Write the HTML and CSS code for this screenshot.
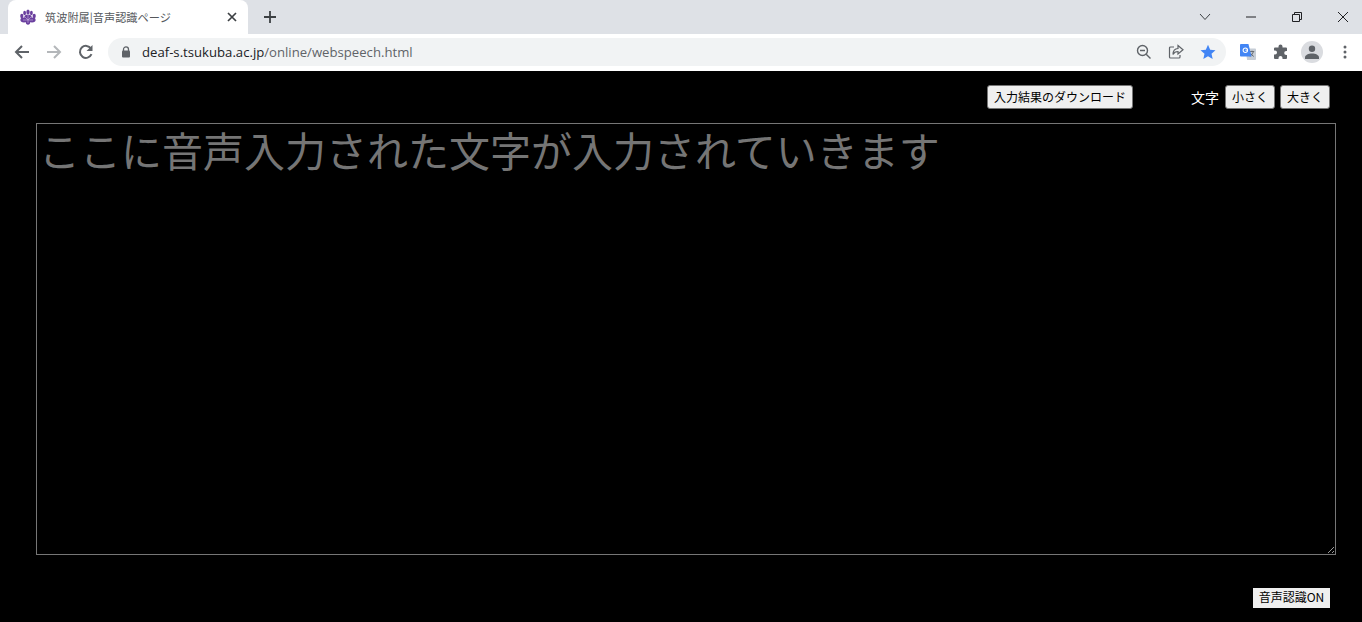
FILE: index.html
```html
<!DOCTYPE html>
<html lang="ja">
<head>
  <meta charset="UTF-8" />
  <meta name="viewport" content="width=device-width, initial-scale=1.0"/>
  <title>筑波附属|音声認識ページ</title>
  <link rel="stylesheet" href="styles.css">
</head>
<body>
  <header class="browser">
    <div class="tabstrip">
      <div class="tab">
        <svg class="favicon" width="16" height="16" viewBox="0 0 16 16">
          <g fill="#6a3f9e">
            <ellipse cx="8" cy="3" rx="1.7" ry="2.6"/>
            <ellipse cx="4.6" cy="4" rx="1.4" ry="2.2"/>
            <ellipse cx="11.4" cy="4" rx="1.4" ry="2.2"/>
            <ellipse cx="1.8" cy="7" rx="1.6" ry="2.2"/>
            <ellipse cx="14.2" cy="7" rx="1.6" ry="2.2"/>
            <ellipse cx="8" cy="8" rx="3.6" ry="2.6"/>
            <ellipse cx="4" cy="11" rx="3.6" ry="2.4"/>
            <ellipse cx="12" cy="11" rx="3.6" ry="2.4"/>
            <ellipse cx="8" cy="13" rx="2.2" ry="2.8"/>
          </g>
          <g stroke="#c9b6e0" stroke-width="0.6" fill="none">
            <path d="M8 5v9M5 8l3 3 3-3M3 11h10"/>
          </g>
        </svg>
        <span class="tab-title">筑波附属|音声認識ページ</span>
        <svg class="tab-close" width="10" height="10" viewBox="0 0 10 10">
          <path d="M1 1l8 8M9 1l-8 8" stroke="#3c4043" stroke-width="1.7" fill="none"/>
        </svg>
      </div>
      <svg class="new-tab" width="14" height="14" viewBox="0 0 14 14">
        <path d="M7 1v12M1 7h12" stroke="#3c4043" stroke-width="1.8" fill="none"/>
      </svg>
      <div class="window-controls">
        <svg class="win-search" width="12" height="8" viewBox="0 0 12 8">
          <path d="M1 1l5 5.5L11 1" stroke="#3c4043" stroke-width="1" fill="none"/>
        </svg>
        <svg class="win-min" width="10" height="2" viewBox="0 0 10 2">
          <path d="M0 1h10" stroke="#202124" stroke-width="1"/>
        </svg>
        <svg class="win-max" width="10" height="10" viewBox="0 0 10 10">
          <path d="M.5 2.5h7v7h-7zM2.5 2.5v-2h7v7h-2" stroke="#202124" stroke-width="1" fill="none"/>
        </svg>
        <svg class="win-close" width="12" height="12" viewBox="0 0 12 12">
          <path d="M1 1l10 10M11 1L1 11" stroke="#202124" stroke-width="1" fill="none"/>
        </svg>
      </div>
    </div>
    <div class="toolbar">
      <svg class="nav-icon" width="16" height="16" viewBox="0 0 16 16">
        <path d="M15 8H2M8 2L2 8l6 6" stroke="#5f6368" stroke-width="2" fill="none"/>
      </svg>
      <svg class="nav-icon" width="16" height="16" viewBox="0 0 16 16">
        <path d="M1 8h13M8 2l6 6-6 6" stroke="#b4b7ba" stroke-width="2" fill="none"/>
      </svg>
      <svg class="nav-icon" width="16" height="16" viewBox="0 0 16 16">
        <path d="M13.5 10.2A6 6 0 1 1 13 4.6" stroke="#5f6368" stroke-width="2" fill="none"/>
        <path d="M14.5 1v6h-6z" fill="#5f6368"/>
      </svg>
      <div class="omnibox">
        <svg class="lock" width="10" height="12" viewBox="0 0 10 12">
          <path d="M2.5 5V3.4a2.5 2.5 0 0 1 5 0V5" stroke="#5f6368" stroke-width="1.3" fill="none"/>
          <rect x="1" y="4.6" width="8" height="7" rx="1" fill="#5f6368"/>
        </svg>
        <span class="url"><span class="url-host">deaf-s.tsukuba.ac.jp</span>/online/webspeech.html</span>
        <div class="omni-actions">
          <svg width="16" height="16" viewBox="0 0 16 16">
            <circle cx="6.5" cy="6.5" r="5" stroke="#5f6368" stroke-width="1.4" fill="none"/>
            <path d="M4 6.5h5M10.2 10.2l4.3 4.3" stroke="#5f6368" stroke-width="1.4" fill="none"/>
          </svg>
          <svg width="16" height="16" viewBox="0 0 16 16">
            <path d="M6 3H2.500a1 1 0 0 0-1 1v9a1 1 0 0 0 1 1h8.500a1 1 0 0 0 1-1v-2" stroke="#5f6368" stroke-width="1.2" fill="none"/>
            <path d="M10 1.500l5 4.300-5 4.200V7.500c-2.500 0-4 .8-5 3 0-3.500 2-5.800 5-6z" stroke="#5f6368" stroke-width="1.200" fill="none"/>
          </svg>
          <svg width="16" height="16" viewBox="0 0 16 16">
            <path d="M8 .8l2.200 4.900 5.300.5-4 3.600 1.200 5.200L8 12.300 3.300 15l1.200-5.200-4-3.600 5.300-.5z" fill="#4285f4"/>
          </svg>
        </div>
      </div>
      <svg class="ext-translate" width="16" height="16" viewBox="0 0 18 18">
        <path d="M6 5h11a1 1 0 0 1 1 1v11a1 1 0 0 1-1 1H8z" fill="#c6cdd6"/>
        <path d="M11 8.500h5M13.500 7.500v1M15 8.500c-.5 2.500-2.200 4.300-4 5.500M12 10.500c.7 1.500 2 2.800 3.500 3.500" stroke="#5f6368" stroke-width="1" fill="none"/>
        <path d="M1 0h8.500L13 14H1a1 1 0 0 1-1-1V1a1 1 0 0 1 1-1z" fill="#4285f4"/>
        <circle cx="6" cy="7" r="2.500" stroke="#fff" stroke-width="1.200" fill="none"/>
        <path d="M6 7h2.700" stroke="#fff" stroke-width="1"/>
      </svg>
      <svg class="ext-puzzle" width="16" height="16" viewBox="0 0 16 16">
        <path d="M5.500 2.500a2 2 0 0 1 4 0V3.500H13a1 1 0 0 1 1 1V7h-.800a2 2 0 0 0 0 4H14v3a1 1 0 0 1-1 1H9.500v-1a2 2 0 0 0-4 0v1H2a1 1 0 0 1-1-1v-3.500h1a2 2 0 0 0 0-4H1V4.500a1 1 0 0 1 1-1h3.500z" fill="#5f6368"/>
      </svg>
      <div class="avatar">
        <svg width="14" height="14" viewBox="0 0 14 14">
          <circle cx="7" cy="3.700" r="3.200" fill="#5f6368"/>
          <path d="M0 14v-1.500C0 10 3.500 8.500 7 8.500s7 1.500 7 4V14z" fill="#5f6368"/>
        </svg>
      </div>
      <svg class="menu-dots" width="4" height="14" viewBox="0 0 4 14">
        <circle cx="2" cy="2" r="1.500" fill="#5f6368"/>
        <circle cx="2" cy="7" r="1.500" fill="#5f6368"/>
        <circle cx="2" cy="12" r="1.500" fill="#5f6368"/>
      </svg>
    </div>
  </header>

  <main class="content">
    <div class="top-controls">
      <button class="btn btn-download">入力結果のダウンロード</button>
      <div class="size-controls">
        <span class="size-label">文字</span>
        <button class="btn">小さく</button>
        <button class="btn">大きく</button>
      </div>
    </div>
    <textarea class="speech-input" placeholder="ここに音声入力された文字が入力されていきます"></textarea>
    <div class="bottom-controls">
      <button class="btn-speech">音声認識ON</button>
    </div>
  </main>
</body>
</html>
```

FILE: styles.css
```css
* {
  box-sizing: border-box;
}

html, body {
  height: 100%;
}

body {
  margin: 0;
  background: #000;
  display: flex;
  flex-direction: column;
  overflow: hidden;
  font-family: "Liberation Sans", "Noto Sans CJK JP", sans-serif;
}

/* browser frame */
.browser {
  flex: none;
  height: 71px;
  background: #fff;
}

.tabstrip {
  height: 34px;
  background: #dee1e6;
  display: flex;
  align-items: flex-end;
  padding-left: 8px;
}

.tab {
  width: 240px;
  height: 34px;
  background: #fff;
  border-radius: 8px 8px 0 0;
  display: flex;
  align-items: center;
  padding: 0 11px 0 12px;
}

.favicon {
  flex: none;
  margin-right: 9px;
}

.tab-title {
  flex: 1;
  font-family: "Noto Sans CJK JP", sans-serif;
  font-size: 11.2px;
  color: #55585c;
  white-space: nowrap;
  overflow: hidden;
}

.new-tab {
  align-self: center;
  margin-left: 15px;
}

.window-controls {
  margin-left: auto;
  align-self: center;
  display: flex;
  align-items: center;
  padding-right: 13px;
}

.win-search {
  margin-right: 35px;
}

.win-min {
  margin-right: 36px;
}

.win-max {
  margin-right: 35px;
}

.toolbar {
  height: 37px;
  display: flex;
  align-items: center;
  padding: 0 0 1px 14px;
}

.nav-icon {
  flex: none;
  margin-right: 16px;
}

.omnibox {
  width: 1118px;
  height: 28px;
  margin-left: -2px;
  background: #f1f3f4;
  border-radius: 14px;
  display: flex;
  align-items: center;
  padding: 0 10px 0 13px;
}

.lock {
  flex: none;
  margin-right: 11px;
}

.url {
  font-family: "Open Sans", sans-serif;
  font-size: 13.15px;
  color: #5f6368;
  white-space: nowrap;
}

.url-host {
  color: #202124;
}

.omni-actions {
  margin-left: auto;
  display: flex;
  align-items: center;
  gap: 16px;
}

.ext-translate {
  flex: none;
  margin-left: 14px;
}

.ext-puzzle {
  flex: none;
  margin-left: 17px;
}

.avatar {
  flex: none;
  width: 22px;
  height: 22px;
  margin-left: 12px;
  border-radius: 50%;
  background: #dadce0;
  display: flex;
  align-items: center;
  justify-content: center;
}

.menu-dots {
  flex: none;
  margin-left: 20px;
}

/* page */
.content {
  flex: 1;
  padding: 14px 26px 14px 36px;
  display: flex;
  flex-direction: column;
}

.top-controls {
  height: 38px;
  display: flex;
  align-items: flex-start;
  justify-content: flex-end;
  padding-right: 6px;
}

.size-controls {
  display: flex;
  align-items: center;
  gap: 5px;
  margin-left: 58px;
}

.size-label {
  color: #fff;
  font-family: "Noto Sans CJK JP", sans-serif;
  font-size: 14px;
  line-height: 24px;
  margin-right: 1px;
}

.btn {
  height: 24px;
  padding: 0 6px 1px;
  background: #efefef;
  border: 1px solid #767676;
  border-radius: 3px;
  color: #000;
  font-family: "Noto Sans CJK JP", sans-serif;
  font-size: 12px;
  line-height: 1;
  white-space: nowrap;
}

.speech-input {
  display: block;
  width: 1300px;
  height: 432px;
  flex: none;
  padding: 2px;
  background: #000;
  border: 1px solid #767676;
  color: #fff;
  font-family: "Noto Sans CJK JP", sans-serif;
  font-size: 41px;
  line-height: 47px;
}

.bottom-controls {
  display: flex;
  justify-content: flex-end;
  margin-top: 33px;
  padding-right: 6px;
}

.btn-speech {
  height: 20px;
  width: 77px;
  padding: 0 0 3px;
  background: #efefef;
  border: none;
  color: #000;
  font-family: "Noto Sans CJK JP", sans-serif;
  font-size: 12px;
  white-space: nowrap;
}
```
